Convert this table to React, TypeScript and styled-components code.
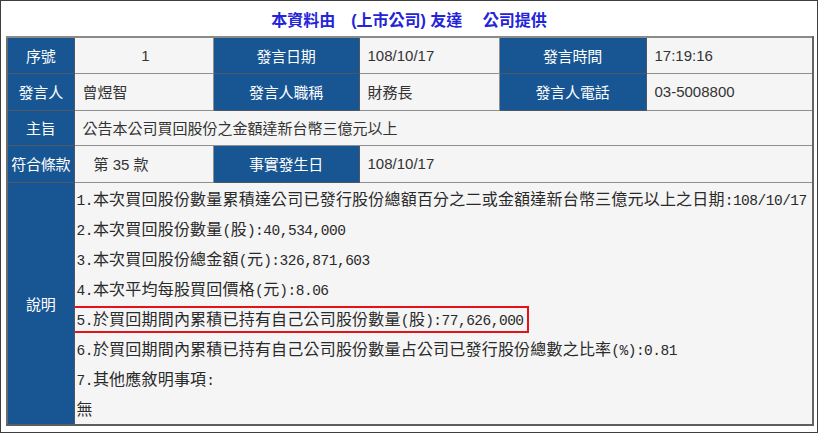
import React from "react";
import styled, { createGlobalStyle } from "styled-components";

const GlobalStyle = createGlobalStyle`
  html, body { margin: 0; padding: 0; background: #ffffff; }
  * { box-sizing: border-box; }
`;

const Frame = styled.div`
  width: 818px;
  height: 433px;
  border: 1px solid #3e3e3e;
  background: #ffffff;
  display: flex;
  flex-direction: column;
  padding: 0 0 0 5px;
`;

const Title = styled.div`
  height: 35px;
  width: 806px;
  display: flex;
  align-items: center;
  justify-content: center;
  font-family: "Liberation Sans", "Noto Sans CJK TC", sans-serif;
  font-weight: 700;
  font-size: 16px;
  color: #2424d8;
  white-space: pre;
`;

const Table = styled.table`
  width: 806px;
  border-collapse: collapse;
  table-layout: fixed;
  border-top: 2px solid #8a8a8a;
  border-left: 2px solid #6a6a6a;
  border-right: 2px solid #666666;
  border-bottom: 2px solid #5e5e5e;
  font-family: "Liberation Sans", "Noto Sans CJK TC", sans-serif;
  font-size: 15px;
`;

const Row = styled.tr<{ $h: number }>`
  height: ${(p) => p.$h}px;
`;

const Label = styled.th`
  background: #175593;
  color: #ffffff;
  font-weight: 400;
  text-align: center;
  vertical-align: middle;
  border: 1px solid #4d5866;
  padding: 0;
  white-space: nowrap;
  letter-spacing: -0.2px;
`;

const Value = styled.td<{ $center?: boolean; $indent?: number }>`
  background: #f5f5f5;
  color: #333333;
  text-align: ${(p) => (p.$center ? "center" : "left")};
  vertical-align: middle;
  border: 1px solid #8f8f8f;
  padding: 0 4px 0 ${(p) => p.$indent ?? 8}px;
  white-space: nowrap;
`;

const Notes = styled.td`
  background: #f5f5f5;
  color: #2a2a2a;
  vertical-align: top;
  border: 1px solid #8f8f8f;
  padding: 0 0 0 2px;
  font-family: "Noto Sans CJK TC", sans-serif;
  font-size: 16px;
  letter-spacing: 0.2px;
  white-space: nowrap;
  overflow: hidden;
`;

const Line = styled.div`
  height: 30px;
  line-height: 30px;
`;

const Ascii = styled.span`
  font-family: "Liberation Mono", monospace;
  font-size: 14.5px;
  letter-spacing: -0.5px;
`;

const Highlight = styled.span`
  position: relative;
  display: inline-block;
  &::after {
    content: "";
    position: absolute;
    left: -7px;
    right: -5px;
    top: 3px;
    bottom: 3px;
    border: 2px solid #e5121a;
    pointer-events: none;
  }
`;

const mixed = (text: string) =>
  text.split(/([\x20-\x7E]+)/).map((part, i) =>
    /^[\x20-\x7E]+$/.test(part) ? <Ascii key={i}>{part}</Ascii> : <React.Fragment key={i}>{part}</React.Fragment>
  );

const notes = [
  "1.本次買回股份數量累積達公司已發行股份總額百分之二或金額達新台幣三億元以上之日期:108/10/17",
  "2.本次買回股份數量(股):40,534,000",
  "3.本次買回股份總金額(元):326,871,603",
  "4.本次平均每股買回價格(元):8.06",
  "5.於買回期間內累積已持有自己公司股份數量(股):77,626,000",
  "6.於買回期間內累積已持有自己公司股份數量占公司已發行股份總數之比率(%):0.81",
  "7.其他應敘明事項:",
  "無",
];

export default function App() {
  return (
    <>
      <GlobalStyle />
      <Frame>
        <Title>本資料由　(上市公司) 友達　 公司提供</Title>
        <Table>
          <colgroup>
            <col style={{ width: 67 }} />
            <col style={{ width: 139 }} />
            <col style={{ width: 146 }} />
            <col style={{ width: 140 }} />
            <col style={{ width: 147 }} />
            <col style={{ width: 167 }} />
          </colgroup>
          <tbody>
            <Row $h={36}>
              <Label>序號</Label>
              <Value $center>1</Value>
              <Label>發言日期</Label>
              <Value>108/10/17</Value>
              <Label>發言時間</Label>
              <Value>17:19:16</Value>
            </Row>
            <Row $h={37}>
              <Label>發言人</Label>
              <Value>曾煜智</Value>
              <Label>發言人職稱</Label>
              <Value>財務長</Value>
              <Label>發言人電話</Label>
              <Value>03-5008800</Value>
            </Row>
            <Row $h={35}>
              <Label>主旨</Label>
              <Value colSpan={5}>公告本公司買回股份之金額達新台幣三億元以上</Value>
            </Row>
            <Row $h={37}>
              <Label>符合條款</Label>
              <Value $indent={19}>第 35 款</Value>
              <Label>事實發生日</Label>
              <Value colSpan={3}>108/10/17</Value>
            </Row>
            <Row $h={243}>
              <Label>說明</Label>
              <Notes colSpan={5}>
                {notes.map((n, i) => (
                  <Line key={i}>{i === 4 ? <Highlight>{mixed(n)}</Highlight> : mixed(n)}</Line>
                ))}
              </Notes>
            </Row>
          </tbody>
        </Table>
      </Frame>
    </>
  );
}
